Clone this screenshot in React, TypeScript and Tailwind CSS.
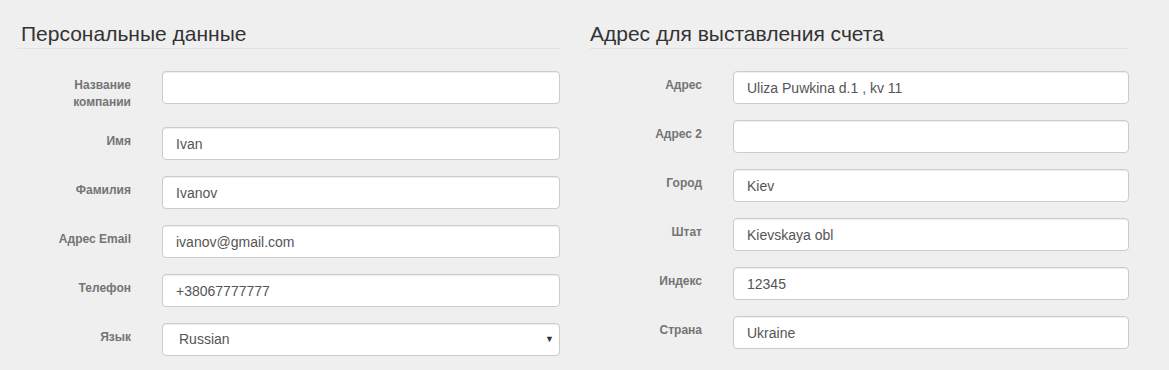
import React from "react";

const left = [
  { label: "Название компании", value: "", tall: true },
  { label: "Имя", value: "Ivan" },
  { label: "Фамилия", value: "Ivanov" },
  { label: "Адрес Email", value: "ivanov@gmail.com" },
  { label: "Телефон", value: "+38067777777" },
];

const right = [
  { label: "Адрес", value: "Uliza Puwkina d.1 , kv 11" },
  { label: "Адрес 2", value: "" },
  { label: "Город", value: "Kiev" },
  { label: "Штат", value: "Kievskaya obl" },
  { label: "Индекс", value: "12345" },
  { label: "Страна", value: "Ukraine" },
];

const inputCls =
  "block h-[33px] w-full rounded-[4px] border border-[#cccccc] bg-white px-[13px] text-[14px] text-[#555555] shadow-[inset_0_1px_1px_rgba(0,0,0,0.075)] outline-none";

function Row({
  label,
  labelW,
  tall,
  children,
}: {
  label: string;
  labelW: string;
  tall?: boolean;
  children: React.ReactNode;
}) {
  return (
    <div className={`flex mb-[16px] ${tall ? "h-[40px]" : "h-[33px]"}`}>
      <label
        className={`${labelW} mr-[31px] shrink-0 pt-[6px] text-right text-[12px] font-bold leading-[17px] text-[#747474]`}
      >
        {label}
      </label>
      <div className="flex-1">{children}</div>
    </div>
  );
}

export default function App() {
  return (
    <div
      className="flex h-[370px] w-[1169px] bg-[#efefef] text-[#333333]"
      style={{ fontFamily: '"Liberation Sans", Arial, sans-serif' }}
    >
      <section className="ml-[17px] w-[543px] pt-[22px]">
        <h3 className="border-b border-[#e2e2e2] pb-[2px] pl-[4px] text-[21px] leading-[24px] font-normal">
          Персональные данные
        </h3>
        <div className="pt-[22px]">
          {left.map((f) => (
            <Row key={f.label} label={f.label} labelW="w-[114px]" tall={f.tall}>
              <input className={inputCls} defaultValue={f.value} />
            </Row>
          ))}
          <Row label="Язык" labelW="w-[114px]">
            <div className="relative h-[33px] w-full rounded-[4px] border border-[#cccccc] bg-white shadow-[inset_0_1px_1px_rgba(0,0,0,0.075)]">
              <span className="absolute left-[16px] top-[7px] text-[14px] leading-[17px] text-[#555555]">
                Russian
              </span>
              <span className="absolute right-[5px] top-[9px] text-[9px] leading-[12px] text-[#333333]">
                ▼
              </span>
            </div>
          </Row>
        </div>
      </section>
      <section className="ml-[32px] w-[537px] pt-[22px]">
        <h3 className="-ml-[2px] border-b border-[#e2e2e2] pb-[2px] text-[21px] leading-[24px] font-normal">
          Адрес для выставления счета
        </h3>
        <div className="pt-[22px]">
          {right.map((f) => (
            <Row key={f.label} label={f.label} labelW="w-[110px]">
              <input className={inputCls} defaultValue={f.value} />
            </Row>
          ))}
        </div>
      </section>
    </div>
  );
}
